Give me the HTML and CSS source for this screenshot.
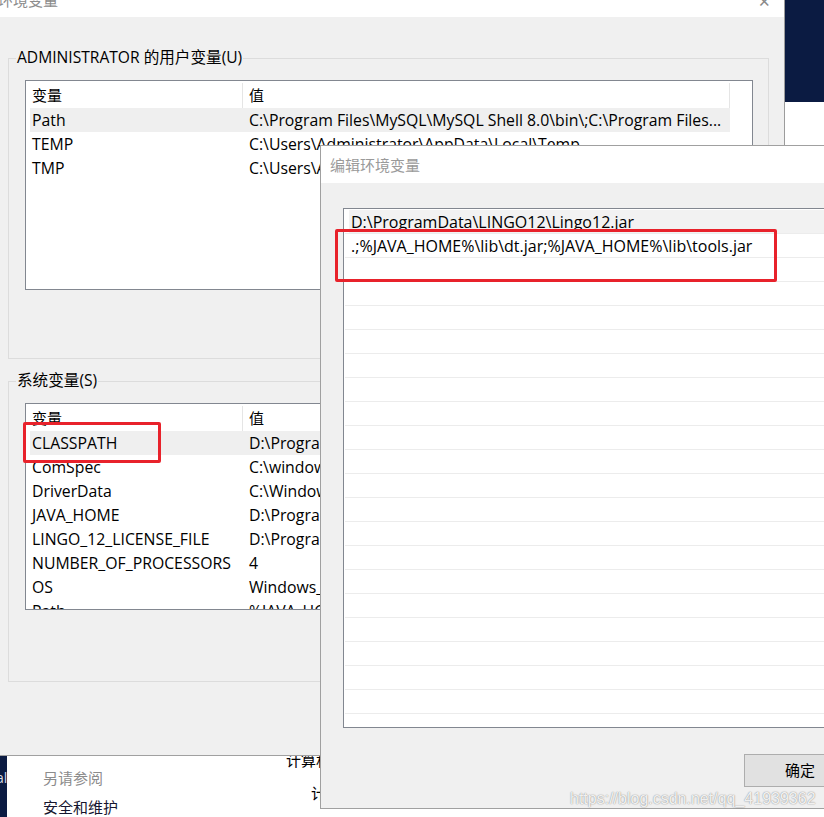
FILE: index.html
```html
<!DOCTYPE html>
<html lang="zh-CN">
<head>
<meta charset="utf-8">
<title>编辑环境变量</title>
<link rel="stylesheet" href="styles.css">
</head>
<body>
<div class="navy-right"></div>

<div class="back-window">
  <div class="navy-left"><span>al</span></div>
  <div class="back-col1">
    <div class="see-also">另请参阅</div>
    <div class="link">安全和维护</div>
  </div>
  <div class="back-col2">
    <div class="comp">计算机</div>
    <div class="comp2">计算机名</div>
  </div>
</div>

<div class="main-dlg">
  <div class="titlebar"><span class="title">环境变量</span><span class="close">✕</span></div>
  <div class="dlg-body">
    <div class="group">
      <span class="legend">ADMINISTRATOR 的用户变量(U)</span>
      <div class="listbox user-list">
        <div class="lv-header"><div class="c1">变量</div><div class="c2">值</div></div>
        <div class="lv-row sel"><div class="c1">Path</div><div class="c2">C:\Program Files\MySQL\MySQL Shell 8.0\bin\;C:\Program Files...</div></div>
        <div class="lv-row"><div class="c1">TEMP</div><div class="c2">C:\Users\Administrator\AppData\Local\Temp</div></div>
        <div class="lv-row"><div class="c1">TMP</div><div class="c2">C:\Users\Administrator\AppData\Local\Temp</div></div>
      </div>
    </div>
    <div class="group">
      <span class="legend">系统变量(S)</span>
      <div class="listbox">
        <div class="lv-header"><div class="c1">变量</div><div class="c2">值</div></div>
        <div class="lv-row sel"><div class="c1">CLASSPATH</div><div class="c2">D:\ProgramData\LINGO12\Lingo12.jar;.;%JAVA_HOME%\lib\dt.jar;...</div></div>
        <div class="lv-row"><div class="c1">ComSpec</div><div class="c2">C:\windows\system32\cmd.exe</div></div>
        <div class="lv-row"><div class="c1">DriverData</div><div class="c2">C:\Windows\System32\Drivers\DriverData</div></div>
        <div class="lv-row"><div class="c1">JAVA_HOME</div><div class="c2">D:\Program Files\Java\jdk1.8.0_201</div></div>
        <div class="lv-row"><div class="c1">LINGO_12_LICENSE_FILE</div><div class="c2">D:\ProgramData\LINGO12\lndlng12.lic</div></div>
        <div class="lv-row"><div class="c1">NUMBER_OF_PROCESSORS</div><div class="c2">4</div></div>
        <div class="lv-row"><div class="c1">OS</div><div class="c2">Windows_NT</div></div>
        <div class="lv-row"><div class="c1">Path</div><div class="c2">%JAVA_HOME%\bin;%JAVA_HOME%\jre\bin;...</div></div>
      </div>
    </div>
  </div>
</div>

<div class="edit-dlg">
  <div class="titlebar"><span class="title">编辑环境变量</span></div>
  <div class="edit-body">
    <div class="edit-list">
      <div class="erow sel">D:\ProgramData\LINGO12\Lingo12.jar</div>
      <div class="erow">.;%JAVA_HOME%\lib\dt.jar;%JAVA_HOME%\lib\tools.jar</div>
      <div class="erow"></div><div class="erow"></div><div class="erow"></div><div class="erow"></div>
      <div class="erow"></div><div class="erow"></div><div class="erow"></div><div class="erow"></div>
      <div class="erow"></div><div class="erow"></div><div class="erow"></div><div class="erow"></div>
      <div class="erow"></div><div class="erow"></div><div class="erow"></div><div class="erow"></div>
      <div class="erow"></div><div class="erow"></div><div class="erow"></div><div class="erow"></div>
    </div>
    <div class="btn-row"><div class="btn">确定</div></div>
  </div>
</div>

<div class="redbox r1"></div>
<div class="redbox r2"></div>
<div class="watermark">https://blog.csdn.net/qq_41939362</div>
</body>
</html>
```

FILE: styles.css
```css
* { box-sizing: border-box; }
html, body { margin: 0; padding: 0; }
body {
  width: 824px;
  height: 817px;
  overflow: hidden;
  position: relative;
  background: #fff;
  font-family: "Open Sans", "Noto Sans CJK SC", sans-serif;
  font-size: 15.8px;
  color: #000;
}

.navy-right {
  position: absolute;
  left: 785px;
  top: 0;
  width: 39px;
  height: 102px;
  background: #0b1b42;
}

/* window behind the dialogs */
.back-window {
  position: absolute;
  left: 0;
  top: 740px;
  width: 824px;
  height: 77px;
  display: flex;
  background: #fff;
  font-size: 15px;
}
.navy-left {
  width: 7px;
  height: 100%;
  background: #0b1b42;
  overflow: hidden;
  white-space: nowrap;
  color: #d6d9e4;
  font-size: 14px;
  line-height: 20px;
  padding-top: 28px;
}
.navy-left span { margin-left: -4px; }
.back-col1 {
  width: 279px;
  padding: 28px 0 0 36px;
  line-height: 20px;
}
.see-also { color: #8c8c8c; }
.link { margin-top: 9px; color: #15152e; }
.back-col2 {
  padding-top: 10px;
  line-height: 20px;
  white-space: nowrap;
}
.comp2 { margin-top: 13px; padding-left: 25px; }

/* main dialog */
.main-dlg {
  position: absolute;
  left: 0;
  top: -14px;
  width: 785px;
  height: 770px;
  border-right: 1px solid #9c9c9c;
  border-bottom: 1px solid #a0a0a0;
  background: #f0f0f0;
  display: flex;
  flex-direction: column;
}
.titlebar {
  flex: none;
  height: 31px;
  background: #fff;
  display: flex;
  align-items: center;
  white-space: nowrap;
}
.title { color: #8c8c8c; font-size: 15px; }
.main-dlg .title { margin-left: -2px; padding-bottom: 4px; }
.close {
  margin-left: auto;
  margin-right: 13px;
  color: #8a8a8a;
  font-size: 15px;
  padding-bottom: 2px;
}
.dlg-body {
  flex: 1;
  padding: 41px 0 0 8px;
}
.group {
  position: relative;
  width: 761px;
  height: 301px;
  border: 1px solid #dcdcdc;
  padding: 21px 0 0 16px;
}
.group + .group { margin-top: 22px; }
.legend {
  position: absolute;
  left: 7px;
  top: -12px;
  padding: 0 1px;
  background: #f0f0f0;
  line-height: 20px;
  font-size: 15.6px;
  white-space: nowrap;
}
.listbox {
  width: 728px;
  height: 207px;
  border: 1px solid #828790;
  background: #fff;
  padding-left: 4px;
  overflow: hidden;
}
.user-list { height: 210px; }
.lv-header, .lv-row {
  display: flex;
  width: 700px;
  white-space: nowrap;
}
.lv-header { height: 27px; line-height: 25px; padding-top: 2px; font-size: 15px; }
.lv-header .c1 { width: 213px; border-right: 1px solid #e5e5e5; padding-left: 2px; }
.lv-header .c2 { width: 487px; border-right: 1px solid #e5e5e5; padding-left: 6px; }
.lv-row { height: 24px; line-height: 23px; padding-top: 1px; }
.lv-row .c1 { width: 213px; padding-left: 2px; }
.lv-row .c2 { width: 487px; padding-left: 6px; overflow: hidden; }
.lv-row.sel { background: #efefef; }

/* edit dialog */
.edit-dlg {
  position: absolute;
  left: 320px;
  top: 145px;
  width: 520px;
  height: 664px;
  border: 1px solid #a0a0a0;
  border-right: none;
  background: #f0f0f0;
  display: flex;
  flex-direction: column;
}
.edit-dlg .titlebar { height: 37px; }
.edit-dlg .title { color: #9a9a9a; padding-left: 9px; }
.edit-body {
  flex: 1;
  padding: 25px 0 0 22px;
}
.edit-list {
  width: 520px;
  height: 520px;
  border: 1px solid #828790;
  border-right: none;
  background: #fff;
  padding: 1px 0 0 1px;
  overflow: hidden;
}
.erow {
  height: 24px;
  border-bottom: 1px solid #ececec;
  line-height: 22px;
  padding: 1px 0 0 6px;
  white-space: nowrap;
  font-size: 16px;
}
.erow.sel { background: linear-gradient(to right, #fff 4px, #f2f2f2 4px); }
.btn-row { padding: 26px 0 0 401px; }
.btn {
  width: 112px;
  height: 33px;
  border: 1px solid #adadad;
  background: #e1e1e1;
  line-height: 31px;
  text-align: center;
  font-size: 15px;
}

/* annotations */
.redbox {
  position: absolute;
  border: 3px solid #e8222b;
  border-radius: 2px;
}
.r1 { left: 335px; top: 229px; width: 442px; height: 53px; }
.r2 { left: 23px; top: 422px; width: 138px; height: 41px; }

.watermark {
  position: absolute;
  left: 570px;
  top: 788px;
  font-family: "Liberation Sans", Arial, sans-serif;
  font-size: 16px;
  line-height: 22px;
  color: rgba(255, 255, 255, 0.9);
  text-shadow: 0 0 1px rgba(0, 0, 0, 0.4), 0 0 2px rgba(0, 0, 0, 0.2);
  white-space: nowrap;
}
```
